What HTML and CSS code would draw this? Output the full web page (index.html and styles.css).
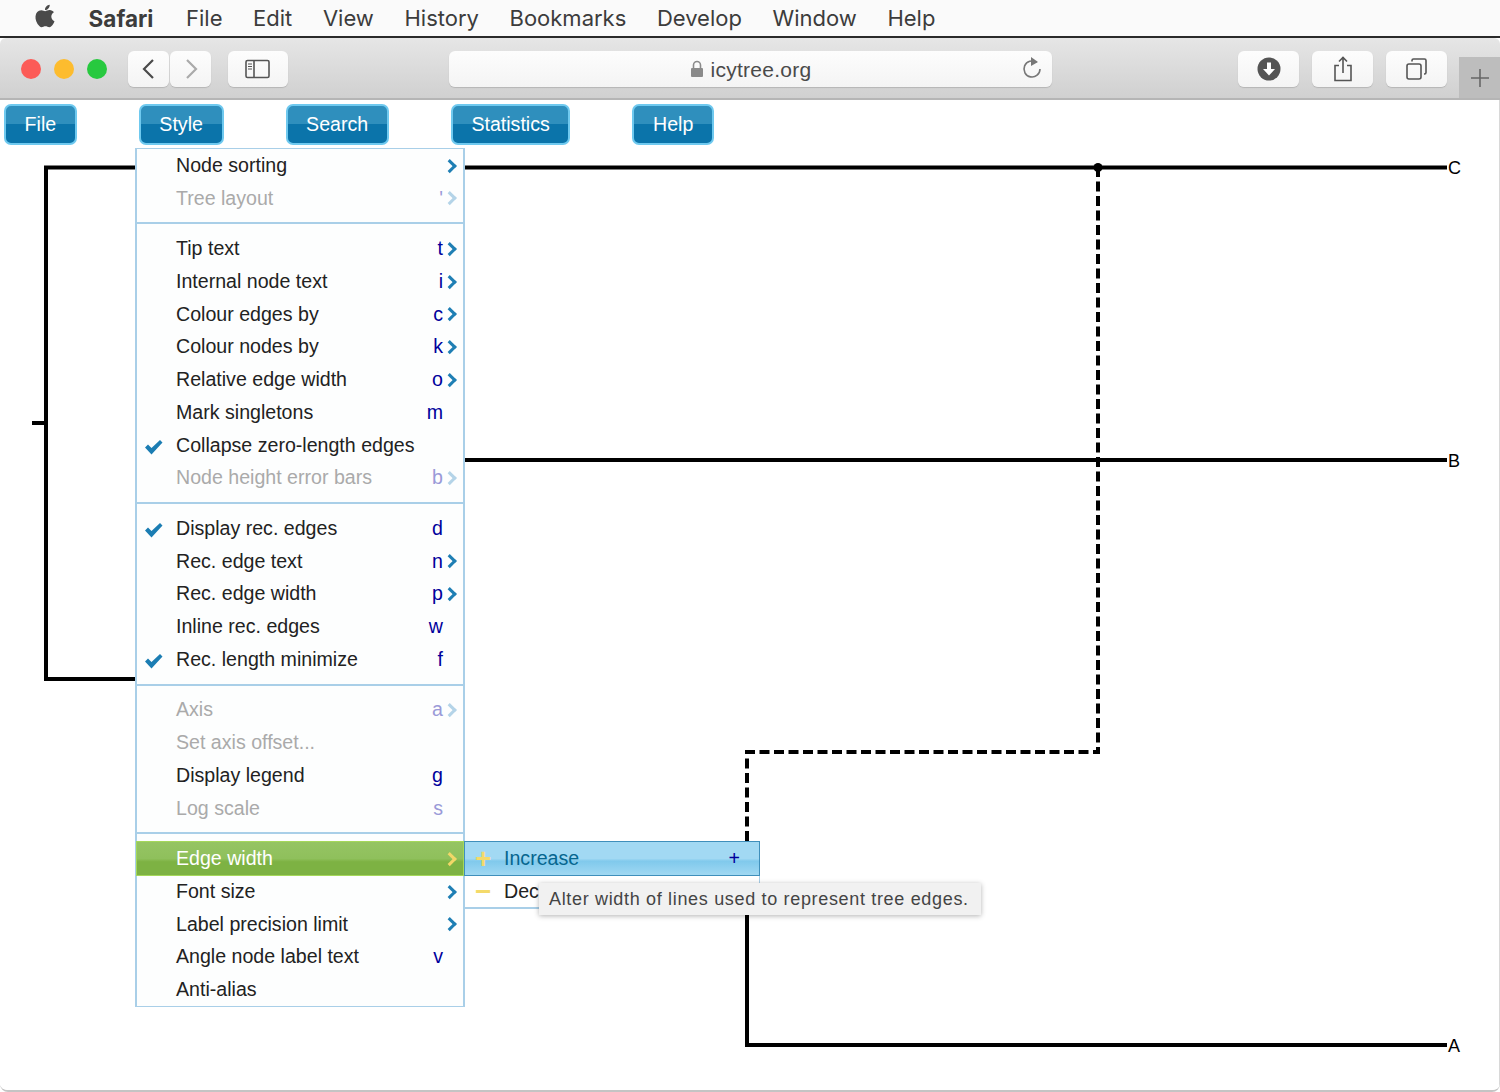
FILE: index.html
```html
<!DOCTYPE html>
<html lang="en">
<head>
    <meta charset="UTF-8">
    <title>icytree.org</title>
    <link rel="stylesheet" href="styles.css">
</head>
<body>
    <div class="menubar">
        <svg class="apple" viewBox="0 0 24 24"><path d="M17.05 20.28c-.98.95-2.05.8-3.08.35-1.09-.46-2.09-.48-3.24 0-1.44.62-2.2.44-3.06-.35C2.79 15.25 3.51 7.59 9.05 7.31c1.35.07 2.29.74 3.08.8 1.18-.24 2.31-.93 3.57-.84 1.51.12 2.65.72 3.4 1.8-3.12 1.87-2.38 5.98.48 7.13-.57 1.5-1.31 2.99-2.54 4.09zM12.03 7.25c-.15-2.23 1.66-4.07 3.74-4.25.29 2.58-2.34 4.5-3.74 4.25z"/></svg>
        <span class="menubar-app">Safari</span>
        <span>File</span>
        <span>Edit</span>
        <span>View</span>
        <span>History</span>
        <span>Bookmarks</span>
        <span>Develop</span>
        <span>Window</span>
        <span>Help</span>
    </div>

    <div class="window">
        <div class="toolbar">
            <div class="lights">
                <span class="light red"></span>
                <span class="light yellow"></span>
                <span class="light green"></span>
            </div>
            <div class="nav-pair">
                <button class="tool nav"><svg width="16" height="24" viewBox="0 0 16 24"><path d="M12 3 3 12l9 9" fill="none" stroke="#4a4a4a" stroke-width="2.2"/></svg></button>
                <button class="tool nav"><svg width="16" height="24" viewBox="0 0 16 24"><path d="M4 3l9 9-9 9" fill="none" stroke="#aaa" stroke-width="2.2"/></svg></button>
            </div>
            <button class="tool sidebar-btn">
                <svg width="26" height="20" viewBox="0 0 26 20" fill="none" stroke="#555"><rect x="1" y="1.5" width="23" height="17" rx="1.5" stroke-width="1.6"/><path d="M9 1.5v17" stroke-width="1.6"/><path d="M3 5h4M3 7.5h4M3 10h4" stroke-width="1"/></svg>
            </button>
            <div class="address">
                <svg class="lock" width="14" height="18" viewBox="0 0 14 18"><path d="M3.5 8V5a3.5 3.5 0 0 1 7 0v3" fill="none" stroke="#8a8a8a" stroke-width="1.6"/><rect x="1" y="8" width="12" height="9" rx="1" fill="#8a8a8a"/></svg>
                <span>icytree.org</span>
                <svg class="reload" width="22" height="24" viewBox="0 0 22 24"><path d="M15.5 6.400A8 8 0 1 0 19 13" fill="none" stroke="#777" stroke-width="1.6"/><path d="M10 1l7 5-7 4z" fill="#777"/></svg>
            </div>
            <div class="tools-right">
                <button class="tool wide"><svg width="24" height="24" viewBox="0 0 24 24"><circle cx="12" cy="12" r="11.5" fill="#555"/><path d="M10 5.500h4V12h4l-6 6.500L6 12h4z" fill="#fff"/></svg></button>
                <button class="tool wide"><svg width="20" height="26" viewBox="0 0 20 26" fill="none" stroke="#555" stroke-width="1.6"><path d="M6 9.500H2v15h16v-15h-4"/><path d="M10 17V2M6 5.500 10 1.500l4 4"/></svg></button>
                <button class="tool wide"><svg width="22" height="22" viewBox="0 0 22 22" fill="none" stroke="#555" stroke-width="1.6"><rect x="1" y="6" width="14" height="15" rx="2"/><path d="M6 3.500V2.500a1.500 1.500 0 0 1 1.500-1.500h11a1.500 1.500 0 0 1 1.500 1.500v12a1.500 1.500 0 0 1-1.500 1.500H18"/></svg></button>
            </div>
            <div class="new-tab"><svg width="18" height="18" viewBox="0 0 18 18"><path d="M9 0v18M0 9h18" stroke="#666" stroke-width="1.6"/></svg></div>
        </div>

        <div class="content">
            <div class="app-buttons">
                <button class="app-btn">File</button>
                <button class="app-btn">Style</button>
                <button class="app-btn">Search</button>
                <button class="app-btn">Statistics</button>
                <button class="app-btn">Help</button>
            </div>

            <!-- the tree, same coordinates as the page -->
            <svg class="tree" width="1500" height="1092" viewBox="0 100 1500 1092">
                <g fill="none" stroke="#000" stroke-width="4">
                    <path d="M32 423h14M1447 167.500H46V679h250"/>
                    <path d="M300 460h1147"/>
                    <path d="M747 840v205h700"/>
                    <path d="M1098 167V752H747v90" stroke-dasharray="10 4.500"/>
                </g>
                <circle cx="1098" cy="167.500" r="4.500"/>
                <text x="1448" y="174">C</text>
                <text x="1448" y="467">B</text>
                <text x="1448" y="1052">A</text>
            </svg>

            <div class="menu">
                <ul class="menu-group">
                    <li class="item"><span class="check"></span><span class="label">Node sorting</span><span class="key"></span><span class="arrow"></span></li>
                    <li class="item off"><span class="check"></span><span class="label">Tree layout</span><span class="key">'</span><span class="arrow"></span></li>
                </ul>
                <ul class="menu-group">
                    <li class="item"><span class="check"></span><span class="label">Tip text</span><span class="key">t</span><span class="arrow"></span></li>
                    <li class="item"><span class="check"></span><span class="label">Internal node text</span><span class="key">i</span><span class="arrow"></span></li>
                    <li class="item"><span class="check"></span><span class="label">Colour edges by</span><span class="key">c</span><span class="arrow"></span></li>
                    <li class="item"><span class="check"></span><span class="label">Colour nodes by</span><span class="key">k</span><span class="arrow"></span></li>
                    <li class="item"><span class="check"></span><span class="label">Relative edge width</span><span class="key">o</span><span class="arrow"></span></li>
                    <li class="item"><span class="check"></span><span class="label">Mark singletons</span><span class="key">m</span><span class="no-arrow"></span></li>
                    <li class="item"><span class="check"><svg width="19" height="16" viewBox="0 0 19 16"><path d="M1 8.500l3-3 3.500 3.500L16 1l2.500 2.500L7.500 15.500z" fill="#1b7db3"/></svg></span><span class="label">Collapse zero-length edges</span><span class="key"></span><span class="no-arrow"></span></li>
                    <li class="item off"><span class="check"></span><span class="label">Node height error bars</span><span class="key">b</span><span class="arrow"></span></li>
                </ul>
                <ul class="menu-group">
                    <li class="item"><span class="check"><svg width="19" height="16" viewBox="0 0 19 16"><path d="M1 8.500l3-3 3.500 3.500L16 1l2.500 2.500L7.500 15.500z" fill="#1b7db3"/></svg></span><span class="label">Display rec. edges</span><span class="key">d</span><span class="no-arrow"></span></li>
                    <li class="item"><span class="check"></span><span class="label">Rec. edge text</span><span class="key">n</span><span class="arrow"></span></li>
                    <li class="item"><span class="check"></span><span class="label">Rec. edge width</span><span class="key">p</span><span class="arrow"></span></li>
                    <li class="item"><span class="check"></span><span class="label">Inline rec. edges</span><span class="key">w</span><span class="no-arrow"></span></li>
                    <li class="item"><span class="check"><svg width="19" height="16" viewBox="0 0 19 16"><path d="M1 8.500l3-3 3.500 3.500L16 1l2.500 2.500L7.500 15.500z" fill="#1b7db3"/></svg></span><span class="label">Rec. length minimize</span><span class="key">f</span><span class="no-arrow"></span></li>
                </ul>
                <ul class="menu-group">
                    <li class="item off"><span class="check"></span><span class="label">Axis</span><span class="key">a</span><span class="arrow"></span></li>
                    <li class="item off"><span class="check"></span><span class="label">Set axis offset...</span><span class="key"></span><span class="no-arrow"></span></li>
                    <li class="item"><span class="check"></span><span class="label">Display legend</span><span class="key">g</span><span class="no-arrow"></span></li>
                    <li class="item off"><span class="check"></span><span class="label">Log scale</span><span class="key">s</span><span class="no-arrow"></span></li>
                </ul>
                <ul class="menu-group">
                    <li class="item active"><span class="check"></span><span class="label">Edge width</span><span class="key"></span><span class="arrow"></span></li>
                    <li class="item"><span class="check"></span><span class="label">Font size</span><span class="key"></span><span class="arrow"></span></li>
                    <li class="item"><span class="check"></span><span class="label">Label precision limit</span><span class="key"></span><span class="arrow"></span></li>
                    <li class="item"><span class="check"></span><span class="label">Angle node label text</span><span class="key">v</span><span class="no-arrow"></span></li>
                    <li class="item"><span class="check"></span><span class="label">Anti-alias</span><span class="key"></span><span class="no-arrow"></span></li>
                </ul>
            </div>

            <div class="submenu">
                <div class="sub-item hover"><span class="sub-icon">+</span><span class="label">Increase</span><span class="key">+</span></div>
                <div class="sub-item"><span class="sub-icon">−</span><span class="label">Dec</span></div>
            </div>

            <div class="tooltip">Alter width of lines used to represent tree edges.</div>
        </div>
    </div>
</body>
</html>
```

FILE: styles.css
```css
* {
    box-sizing: border-box;
}
html, body {
    height: 100%;
}
body {
    margin: 0;
    background: #fff;
    font-family: "Liberation Sans", Arial, sans-serif;
    overflow: hidden;
}

/* mac menu bar */
.menubar {
    display: flex;
    align-items: center;
    gap: 30.6px;
    height: 38px;
    padding-left: 30px;
    background: #fafafa;
    border-bottom: 2px solid #2a2a2a;
    font-family: Inter, "Liberation Sans", sans-serif;
    font-size: 22px;
    color: #3c3c3c;
}
.apple {
    width: 30px;
    height: 30px;
    margin-right: -2px;
    margin-top: -4px;
    fill: #4a4a4a;
}
.menubar-app {
    margin-right: 2px;
    font-size: 22.5px;
    font-weight: 700;
}

/* browser window */
.window {
    height: 1054px;
    border-radius: 6px 6px 8px 8px;
    border-bottom: 2px solid #c4c4c4;
    overflow: hidden;
}
.toolbar {
    display: flex;
    align-items: flex-start;
    height: 62px;
    padding-top: 13px;
    background: linear-gradient(#e6e6e6, #d0d0d0);
    border-bottom: 2px solid #b5b5b5;
}
.toolbar > * {
    flex: none;
}
.lights {
    display: flex;
    gap: 13px;
    margin: 8px 0 0 21px;
}
.light {
    width: 20px;
    height: 20px;
    border-radius: 50%;
}
.red { background: #fc5b57; }
.yellow { background: #fdbc2e; }
.green { background: #27c93f; }

.tool {
    display: flex;
    align-items: center;
    justify-content: center;
    height: 36px;
    padding: 0;
    background: linear-gradient(#fdfdfd, #f4f4f4);
    border: none;
    border-radius: 6px;
    box-shadow: 0 1px 1px #b5b5b5;
}
.nav-pair {
    display: flex;
    gap: 1px;
    margin-left: 21px;
}
.nav {
    width: 41px;
}
.sidebar-btn {
    width: 60px;
    margin-left: 17px;
}
.address {
    display: flex;
    align-items: center;
    justify-content: center;
    position: relative;
    width: 603px;
    height: 36px;
    margin-left: 161px;
    padding-top: 2px;
    background: linear-gradient(#fdfdfd, #f4f4f4);
    border-radius: 6px;
    box-shadow: 0 1px 1px #b5b5b5;
    font-size: 21px;
    letter-spacing: 0.25px;
    color: #4a4a4a;
}
.lock {
    margin-right: 7px;
    margin-top: -2px;
}
.reload {
    position: absolute;
    right: 9px;
    top: 5px;
}
.tools-right {
    display: flex;
    gap: 13px;
    margin-left: 186px;
}
.wide {
    width: 61px;
}
.new-tab {
    display: flex;
    align-items: center;
    justify-content: center;
    width: 41px;
    height: 41px;
    margin: 6px 0 0 12px;
    background: #bdbdbd;
}

/* app area */
.content {
    position: relative;
    height: 990px;
    background: #fff;
    border-right: 1px solid #d8d8d8;
}
.app-buttons {
    display: flex;
    gap: 62px;
    padding: 4px 0 0 4px;
}
.app-btn {
    height: 41px;
    padding: 0 18.6px;
    background: linear-gradient(#2f8fbd 0, #2f8fbd 50%, #0b74aa 50%, #0b74aa 100%);
    border: 2px solid #6fc9ef;
    border-radius: 7px;
    font-family: "Liberation Sans", Arial, sans-serif;
    font-size: 19.6px;
    color: #fff;
}

.tree {
    position: absolute;
    left: 0;
    top: 0;
}
.tree text {
    font-size: 18px;
    fill: #000;
}

/* style menu */
.menu {
    position: absolute;
    left: 135px;
    top: 48px;
    width: 330px;
    background: #fdfefe;
    border: 2px solid #a9cfe8;
    border-width: 1px 2px;
}
.menu-group {
    list-style: none;
    margin: 0;
    padding: 0 0 7.75px;
    border-bottom: 2px solid #a9cfe8;
    margin-bottom: 8px;
}
.menu-group:last-child {
    padding: 0;
    margin: 0;
    border-bottom: none;
}
.item {
    display: flex;
    align-items: center;
    height: 32.75px;
    font-size: 19.6px;
    color: #222;
}
.check {
    display: flex;
    align-items: center;
    width: 39px;
    height: 100%;
    padding: 3px 0 0 7px;
}
.label {
    flex: 1;
    white-space: nowrap;
}
.key {
    color: #00009c;
}
.arrow, .no-arrow {
    width: 20px;
    flex: none;
}
.arrow::after {
    content: "";
    display: block;
    width: 6.5px;
    height: 6.5px;
    margin-left: 2px;
    border-top: 3px solid #1f7fb4;
    border-right: 3px solid #1f7fb4;
    transform: rotate(45deg);
}
.off {
    color: #aaa;
}
.off .key {
    color: #9a9ad8;
}
.off .arrow::after {
    border-color: #b4d4e8;
}
.active {
    background: linear-gradient(#95c463 0, #8fc05c 50%, #7db243 60%, #7db243 100%);
    box-shadow: 0 0 0 1px #a5d85a;
    position: relative;
    color: #fff;
}
.active .arrow::after {
    border-color: #f2d768;
}

/* submenu next to the active row */
.submenu {
    position: absolute;
    left: 464px;
    top: 741px;
    width: 296px;
    background: #fff;
    border: 1px solid #a9cfe8;
    border-width: 0 1px 2px;
}
.sub-item {
    display: flex;
    align-items: center;
    height: 31px;
    padding-right: 19px;
    font-size: 19.6px;
    color: #222;
}
.sub-item.hover {
    height: 35px;
    margin: 0 -1px;
    background: linear-gradient(#a2d9f3 0, #a2d9f3 50%, #80c9ec 58%, #a0d8f2 100%);
    border: 1px solid #3f8fbb;
    color: #06668f;
}
.sub-icon {
    width: 39px;
    padding-left: 10px;
    font-size: 28px;
    font-weight: 700;
    color: #f4da6a;
}
.sub-item .key {
    color: #00009c;
}

.tooltip {
    position: absolute;
    left: 539px;
    top: 783px;
    width: 442px;
    height: 32px;
    padding-left: 10px;
    background: #f1f1f1;
    box-shadow: 0 1px 5px rgba(0, 0, 0, 0.3);
    font-size: 18px;
    letter-spacing: 0.67px;
    line-height: 32px;
    color: #444;
    white-space: nowrap;
}
```
